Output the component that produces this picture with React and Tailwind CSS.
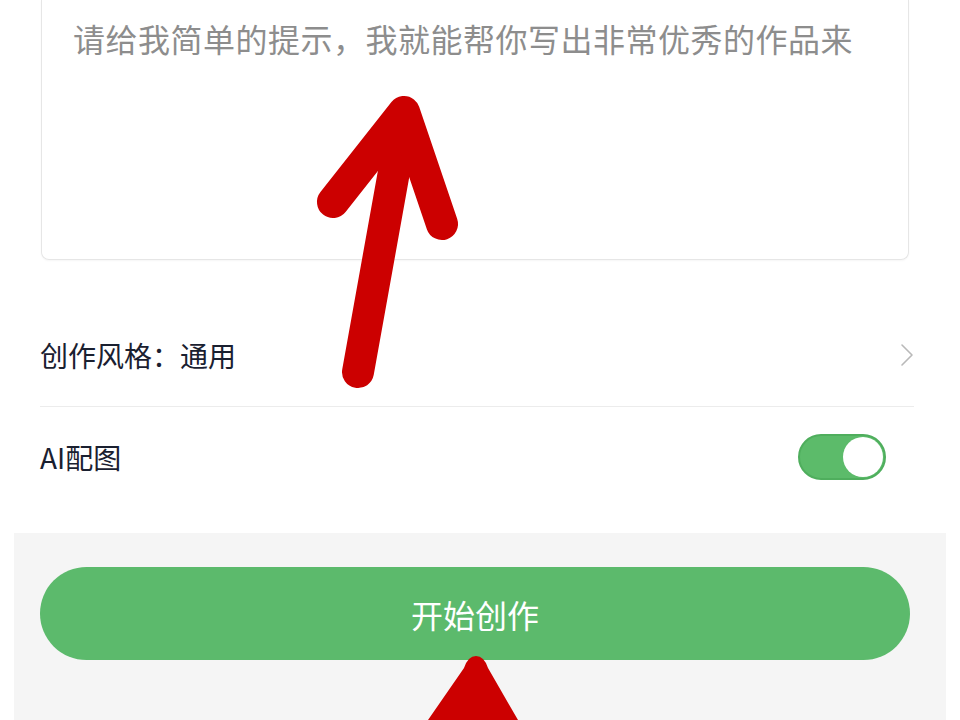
import {useState} from 'react';

const font = {fontFamily: '"Noto Sans CJK SC", "Noto Sans", sans-serif'};

const Chevron = () => (
  <svg width="14" height="24" viewBox="0 0 14 24" fill="none">
    <path d="M2 2l10 10L2 22" stroke="#b9b9b9" strokeWidth="1.6" strokeLinecap="round" strokeLinejoin="round" />
  </svg>
);

const Toggle = ({on, onChange}) => (
  <button
    onClick={() => onChange(!on)}
    className={`relative w-[88px] h-[46px] rounded-full border-2 transition-colors ${on ? 'bg-[#5cbb6a] border-[#4fae5d]' : 'bg-[#e5e5e5] border-[#dcdcdc]'}`}>
    <span className={`absolute top-[1px] w-[40px] h-[40px] rounded-full bg-white transition-all ${on ? 'right-[1px]' : 'left-[1px]'}`} />
  </button>
);

// red hand-drawn annotation arrows over the screen
const Arrows = () => (
  <svg className="absolute inset-0 pointer-events-none" width="960" height="720" viewBox="0 0 960 720">
    <g stroke="#cc0000" strokeWidth="32" strokeLinecap="round" strokeLinejoin="round" fill="none">
      <path d="M358 372L404 116" />
      <path d="M333 202L404 112L442 224" />
    </g>
    <path d="M476 656Q468 656 464 668L428 720L518 720L488 668Q484 656 476 656Z" fill="#cc0000" />
  </svg>
);

export default function App() {
  const [aiImage, setAiImage] = useState(true);

  return (
    <div className="relative w-[960px] h-[720px] bg-white overflow-hidden" style={font}>
      {/* Prompt box */}
      <div className="mx-[41px] w-[868px] h-[260px] border-x border-b border-[#e6e6e6] rounded-b-lg shadow-[0_1px_2px_rgba(0,0,0,0.04)] pt-[14px] px-[31px]">
        <p className="text-[32px] leading-[48px] tracking-[0.5px] text-[#8d8d8d]">请给我简单的提示，我就能帮你写出非常优秀的作品来</p>
      </div>

      {/* Style row */}
      <div className="mx-[40px] mr-[46px] pt-[77px] pb-[33px] flex items-center justify-between border-b border-[#ececec]">
        <span className="text-[28px] leading-[36px] text-[#1a2030]">创作风格：通用</span>
        <Chevron />
      </div>

      {/* AI image row */}
      <div className="ml-[40px] mr-[74px] pt-[27px] pb-[53px] flex items-center justify-between">
        <span className="text-[28px] leading-[36px] text-[#1a2030]">AI配图</span>
        <Toggle on={aiImage} onChange={setAiImage} />
      </div>

      {/* Bottom action */}
      <div className="mx-[14px] h-[200px] bg-[#f5f5f5] pt-[34px] pl-[26px] pr-[36px]">
        <button className="w-full h-[93px] rounded-full bg-[#5cba6c] text-white text-[32px]">开始创作</button>
      </div>

      <Arrows />
    </div>
  );
}
